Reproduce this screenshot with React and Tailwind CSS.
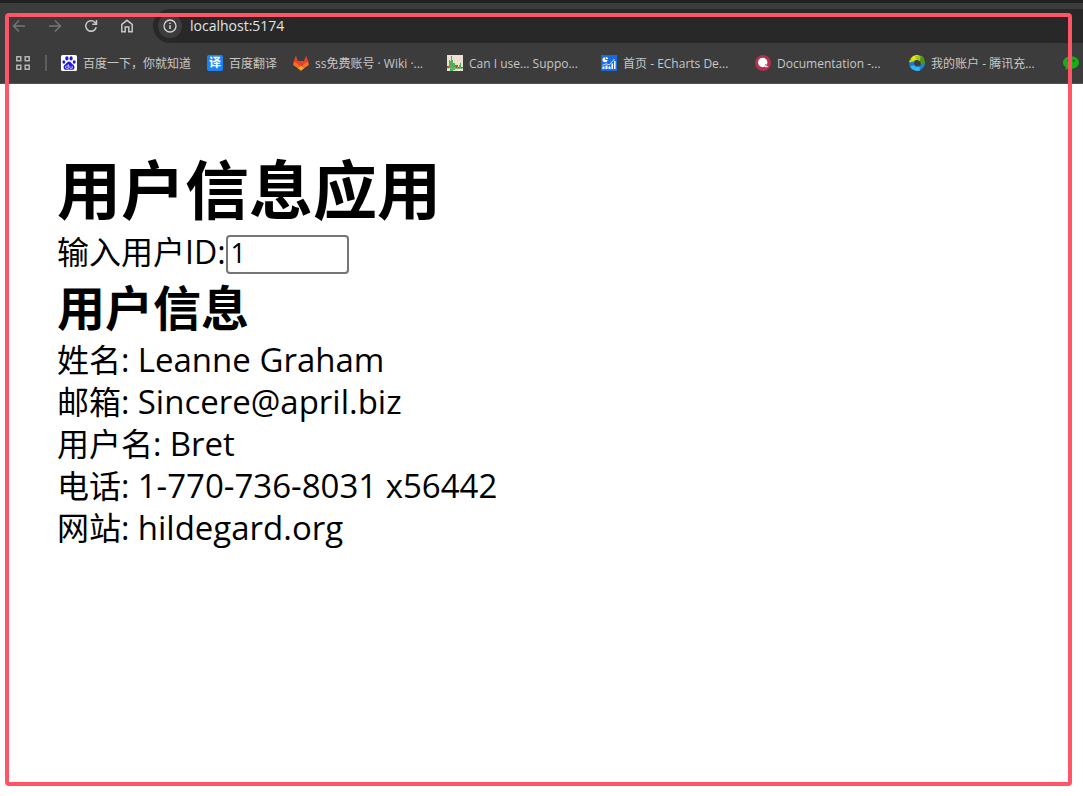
import React, { useState } from "react";

function Baidu() {
  return (
    <svg viewBox="0 0 16 16" className="size-4 shrink-0" aria-hidden="true">
      <rect width="16" height="16" rx="1.5" fill="#fff" />
      <g fill="#2319dc">
        <ellipse cx="2.800" cy="7" rx="1.500" ry="1.800" />
        <ellipse cx="5.900" cy="3.400" rx="1.600" ry="2.100" />
        <ellipse cx="10.100" cy="3.400" rx="1.600" ry="2.100" />
        <ellipse cx="13.200" cy="7" rx="1.500" ry="1.800" />
        <path d="M8 6.400c-1.400 0-2 1.100-2.800 2.100C4.200 9.600 2.600 10.400 2.600 12.200c0 1.600 1.100 2.600 2.600 2.600 1 0 1.800-.3 2.800-.3s1.900.3 2.900.3c1.500 0 2.600-1 2.600-2.600 0-1.800-1.600-2.600-2.700-3.700C10 7.500 9.400 6.400 8 6.400z" />
      </g>
      <g fill="none" stroke="#fff" strokeWidth=".7">
        <path d="M7.300 9.200v4.200H5.600a1.200 1.200 0 0 1 0-2.400h1.700" />
        <path d="M8.900 10.800v2.100q0 .5.600.5h1.700v-2.600" />
      </g>
    </svg>
  );
}

function Translate() {
  return (
    <span aria-hidden="true" className="flex size-4 shrink-0 items-center justify-center rounded-[2px] bg-[#1a84f5] text-xs leading-4 font-bold text-white">
      译
    </span>
  );
}

function Gitlab() {
  return (
    <svg viewBox="0 0 16 16" className="size-4 shrink-0" aria-hidden="true">
      <path fill="#e24329" d="M2.800.4 5 6h6L13.200.4l2.600 7.500L8 15.600.2 7.900z" />
      <path fill="#fc6d26" d="M1 7q2.800.4 4.500 2.600L8 15.600.1 10zM15 7q-2.800.4-4.500 2.600L8 15.600l7.900-5.600z" />
      <path fill="#fca326" d="m8 10.600 3 2.700-3 2.400-3-2.400z" />
    </svg>
  );
}

function CanIUse() {
  return (
    <svg viewBox="0 0 16 16" className="size-4 shrink-0" aria-hidden="true">
      <path fill="#eee0cf" d="M0 0h16v16H0z" />
      <path fill="#d33c38" d="M0 11h2v2H0zm8-1h3v3H8zm3 2h5v1h-5z" />
      <path fill="#49b455" d="M2 5h1v1h1V1h1v4h1v3h2v3h1v2h1v-2h1v2h1v-3h1V8h1v5h1v1H8v1H6v1H3v-3H2z" />
      <path fill="#9ac69a" d="M0 13h16v1H0z" opacity=".5" />
    </svg>
  );
}

function ECharts() {
  return (
    <svg viewBox="0 0 16 16" className="size-4 shrink-0" aria-hidden="true">
      <path fill="#176cdf" d="M0 0h16v16H0z" />
      <circle cx="4" cy="4.800" r="2.500" fill="#fff" />
      <path fill="#176cdf" d="M4 2v2.800h3V2z" />
      <path fill="#fff" d="M4.800 1.700V4h2.300a2.500 2.500 0 0 0-2.300-2.300zM1.500 11.500h2V14h-2zm3-1h2V14h-2zm3 1h2V14h-2zm3-3H12V14h-1.500zM13 6h1.500v8H13z" />
      <path d="M1.500 10.200 5 8.800l3.500 1 5-5.800" fill="none" stroke="#fff" strokeWidth=".8" />
    </svg>
  );
}

function Docs() {
  return (
    <svg viewBox="0 0 16 16" className="size-4 shrink-0" aria-hidden="true">
      <circle cx="8" cy="8" r="8" fill="#b03050" />
      <circle cx="7.700" cy="7.500" r="4.700" fill="#fff" />
      <path d="m9 9 1 3.300 3.500-.2-3-2.300z" fill="#fff" />
      <path d="m10.500 9 .8 2.400" stroke="#b03050" strokeWidth=".8" />
    </svg>
  );
}

function Tencent() {
  return (
    <svg viewBox="0 0 16 16" className="size-4 shrink-0" aria-hidden="true">
      <path fill="#e5e610" d="M.8 5.500C2 1.500 6-.7 10 .2L9 4.500 5.500 5.500z" />
      <path fill="#a8c614" d="M6 1.500C9-.5 13.500.3 15 3.500L12 6.500 7.500 4.800z" />
      <path fill="#4e941c" d="M11.500.8C15 2.500 16.500 6 15.800 9.500L12 10.500 11 5.500z" />
      <path fill="#1687d8" d="M15.900 7.500c.1 4.500-3.400 8.200-7.400 8.400L7 12l4-1.200z" />
      <path fill="#35b5f5" d="M11 15.500C6.500 17 2 14.500.6 10.500L4.500 8.500 6 11.200l4.500.8z" />
      <path fill="#187bc8" d="M1 11.500C-.3 8.500 0 6 1.200 4.200l4.300 1.300L5.200 10z" />
      <path fill="#d8dc14" d="m.8 5 5-.8-.4 2L.2 7.500z" />
    </svg>
  );
}

function WeChat() {
  return (
    <svg viewBox="0 0 16 16" className="size-4 shrink-0" aria-hidden="true">
      <path fill="#1aad19" d="M8 1.200c4.400 0 8 2.800 8 6.300s-3.600 6.300-8 6.300c-.9 0-1.800-.1-2.600-.3L2.500 15l.4-2.600C1.100 11.200 0 9.500 0 7.500c0-3.500 3.600-6.300 8-6.300z" />
      <circle cx="5.300" cy="5.700" r="1" fill="#3c3c3c" />
      <circle cx="10.700" cy="5.700" r="1" fill="#3c3c3c" />
    </svg>
  );
}

const bookmarks = [
  { Icon: Baidu, text: "百度一下，你就知道" },
  { Icon: Translate, text: "百度翻译" },
  { Icon: Gitlab, text: "ss免费账号 · Wiki ·...", fixed: true },
  { Icon: CanIUse, text: "Can I use... Suppo...", fixed: true },
  { Icon: ECharts, text: "首页 - ECharts De...", fixed: true },
  { Icon: Docs, text: "Documentation -...", fixed: true },
  { Icon: Tencent, text: "我的账户 - 腾讯充...", fixed: true },
  { Icon: WeChat, text: "" },
];

function NavButton({ label, className, children }) {
  return (
    <button type="button" aria-label={label} className={"flex size-4 shrink-0 items-center justify-center " + className}>
      <svg viewBox="0 0 16 16" className="size-4" fill="none" stroke="currentColor" strokeWidth="1.5">
        {children}
      </svg>
    </button>
  );
}

function BrowserChrome() {
  return (
    <header className="overflow-hidden border-t-3 border-b border-t-[#202221] border-b-[#515151] bg-[#3c3c3c] pt-1.5 text-[#c7c7c7]">
      <div className="flex h-[34px] items-center">
        <nav className="flex w-[153px] shrink-0 items-center gap-5 pl-[11px]">
          <NavButton label="Back" className="text-[#757575]">
            <path d="M14 8H2.800M8 2.500 2.500 8 8 13.500" />
          </NavButton>
          <NavButton label="Forward" className="text-[#757575]">
            <path d="M2 8h11.200M8 2.500 13.500 8 8 13.500" />
          </NavButton>
          <NavButton label="Reload" className="text-[#c7c7c7]">
            <path d="M13.200 9.200A5.300 5.300 0 1 1 11.900 4.300L13.500 6M13.500 2v4.300H9.300" />
          </NavButton>
          <NavButton label="Home" className="text-[#c7c7c7]">
            <path d="M2.800 6.400 8 2.300l5.200 4.100v7.300H9.800V9H6.200v4.700H2.800z" />
          </NavButton>
        </nav>
        <div className="flex h-[34px] flex-1 items-center gap-2 rounded-l-full bg-[#282828] pl-[5px]">
          <button type="button" aria-label="Site information" className="flex size-6 shrink-0 items-center justify-center rounded-full bg-[#3c3c3c]">
            <svg viewBox="0 0 16 16" className="size-4" fill="none" stroke="#d5d5d5" strokeWidth="1.300">
              <circle cx="8" cy="8" r="6" />
              <path d="M8 7.300v3.600M8 4.700v1.400" strokeWidth="1.500" />
            </svg>
          </button>
          <input
            aria-label="Address"
            defaultValue="localhost:5174"
            className="min-w-0 flex-1 bg-transparent text-sm text-[#e3e3e3] outline-none"
          />
        </div>
      </div>
      <div className="flex h-10 items-center pl-[15px]">
        <button type="button" aria-label="Apps" className="mr-3.5 size-4 shrink-0">
          <svg viewBox="0 0 16 16" className="size-4" fill="none" stroke="#b5b5b5" strokeWidth="1.500">
            <path d="M1.800 1.800h4v4h-4zM10.200 1.800h4v4h-4zM1.800 10.200h4v4h-4zM10.200 10.200h4v4h-4z" />
          </svg>
        </button>
        <span className="mr-3.5 h-4 w-0.5 shrink-0 bg-[#5c5c5c]" />
        <div className="flex items-center gap-4">
          {bookmarks.map(({ Icon, text, fixed }, i) => (
            <a
              key={i}
              href="#"
              aria-label={text || "WeChat"}
              className={"flex shrink-0 items-center gap-1.5 text-xs whitespace-nowrap " + (fixed ? "w-[138px]" : "")}
            >
              <Icon />
              {text && <span className="pt-0.5">{text}</span>}
            </a>
          ))}
        </div>
      </div>
    </header>
  );
}

const user = [
  ["姓名", "Leanne Graham"],
  ["邮箱", "Sincere@april.biz"],
  ["用户名", "Bret"],
  ["电话", "1-770-736-8031 x56442"],
  ["网站", "hildegard.org"],
];

export default function App() {
  const [id, setId] = useState("1");
  return (
    <div className="relative min-h-screen bg-white font-['Open_Sans','Noto_Sans_CJK_SC',sans-serif]">
      <BrowserChrome />
      <main className="pt-16 pr-14 pl-[57px] text-[32px] leading-[42px] text-black">
        <h1 className="text-[64px] leading-[84px] font-bold">用户信息应用</h1>
        <div className="flex h-11 items-center">
          <label htmlFor="user-id" className="self-start leading-10">输入用户ID:</label>
          <input
            id="user-id"
            type="number"
            value={id}
            onChange={(e) => setId(e.target.value)}
            className="h-[39px] w-[123px] rounded border-2 border-[#767676] bg-white px-[3px] pb-0.5 text-[27px]"
          />
        </div>
        <h2 className="text-[48px] leading-[63px] font-bold">用户信息</h2>
        {user.map(([name, value]) => (
          <p key={name}>
            {name}: <span className="text-[33px]">{value}</span>
          </p>
        ))}
      </main>
      <div className="pointer-events-none absolute top-[13px] right-[11px] bottom-[10px] left-[5px] rounded border-4 border-[#ff5566]" />
    </div>
  );
}
